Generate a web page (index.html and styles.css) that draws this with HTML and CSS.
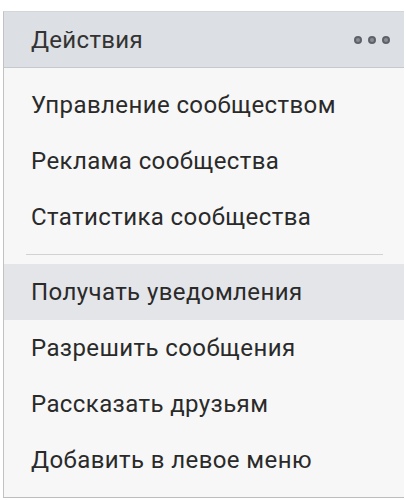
FILE: index.html
```html
<!DOCTYPE html>
<html>
<head>
<meta charset="utf-8">
<link rel="stylesheet" href="styles.css">
</head>
<body>
<div class="panel">
  <div class="header">
    <span class="title">Действия</span>
    <span class="dots"><i></i><i></i><i></i></span>
  </div>
  <div class="list">
    <div class="item">Управление сообществом</div>
    <div class="item">Реклама сообщества</div>
    <div class="item">Статистика сообщества</div>
    <div class="sep"></div>
    <div class="item active">Получать уведомления</div>
    <div class="item">Разрешить сообщения</div>
    <div class="item">Рассказать друзьям</div>
    <div class="item">Добавить в левое меню</div>
  </div>
</div>
</body>
</html>
```
FILE: styles.css
```css
html, body { margin: 0; padding: 0; background: #ffffff; }
body { padding: 11px 2px 3px 3px; font-family: Roboto, "Noto Sans", sans-serif; color: #2a2a2a; }
.panel {
  border-left: 1px solid #c2c2c2;
  border-top: 1px solid #d4d6d8;
  border-bottom: 1px solid #bdbdbd;
  background: #f7f7f7;
}
.header {
  height: 55px;
  background: #dcdfe3;
  border-bottom: 1px solid #c5c8cc;
  display: flex;
  align-items: center;
  justify-content: space-between;
  padding: 0 14px 0 27px;
}
.title { font-size: 24px; letter-spacing: 0.3px; color: #333; }
.dots { display: flex; gap: 6px; }
.dots i {
  width: 8px; height: 8px; border-radius: 50%;
  background: #8a8e94; box-sizing: border-box; border: 2px solid #5e6268;
}
.list { padding: 9px 0 9px 0; }
.item {
  height: 56px;
  display: flex;
  align-items: center;
  padding-left: 27px;
  font-size: 24px;
  letter-spacing: 0.4px;
  color: #2a2a2a;
}
.item.active { background: #e3e5e9; }
.sep { height: 1px; background: #d2d2d2; margin: 9px 21px 9px 22px; }
```
